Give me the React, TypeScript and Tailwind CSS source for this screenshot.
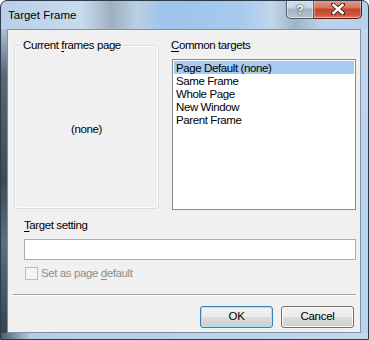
import React from 'react';

const font = { fontFamily: '"Liberation Sans", Arial, sans-serif' };

function TitleButtons() {
  return (
    <div className="flex self-start mr-[6px] -mt-px">
      <div className="w-[28px] h-[19px] rounded-bl-[5px] border border-t-0 border-[#4d5c6b] bg-[linear-gradient(to_bottom,#dbe4ee_0%,#c5d2df_45%,#a3b3c4_50%,#b5c3d1_100%)] flex items-center justify-center shadow-[inset_0_0_0_1px_rgba(255,255,255,0.5)]">
        <span
          className="text-white font-bold text-[13px] leading-none"
          style={{ ...font, textShadow: '0 0 2px #2a3a4a, 0 0 1px #2a3a4a' }}
        >
          ?
        </span>
      </div>
      <div className="w-[48px] h-[19px] rounded-br-[5px] border border-l-0 border-t-0 border-[#5a1a12] bg-[linear-gradient(to_bottom,#e8a08f_0%,#d7705c_45%,#c2442b_50%,#d0583d_85%,#e08a70_100%)] flex items-center justify-center shadow-[inset_0_0_0_1px_rgba(255,255,255,0.35)]">
        <svg width="14" height="12" viewBox="0 0 14 12">
          <path d="M2 1.5 L12 10.5 M12 1.5 L2 10.5" stroke="#4a1a10" strokeWidth="4.2" strokeLinecap="square" />
          <path d="M2.5 2 L11.5 10 M11.5 2 L2.5 10" stroke="#ffffff" strokeWidth="2.6" strokeLinecap="square" />
        </svg>
      </div>
    </div>
  );
}

function Button({ label, isDefault }: { label: string; isDefault?: boolean }) {
  return (
    <button
      className={
        'w-[73px] h-[22px] rounded-[3px] border text-[11.5px] tracking-[-0.3px] text-black bg-[linear-gradient(to_bottom,#f2f2f2_0%,#ebebeb_50%,#dddddd_51%,#cfcfcf_100%)] ' +
        (isDefault
          ? 'border-[#3c7fb1] shadow-[inset_0_0_0_1px_#a8e2f8]'
          : 'border-[#707070] shadow-[inset_0_0_0_1px_#fbfbfb]')
      }
      style={font}
    >
      {label}
    </button>
  );
}

export default function App() {
  const targets = ['Page Default (none)', 'Same Frame', 'Whole Page', 'New Window', 'Parent Frame'];

  return (
    <div
      className="w-[369px] h-[340px] flex flex-col border border-[#2b3a47] rounded-t-[7px] overflow-hidden bg-[linear-gradient(to_right,#b7cfe7_0%,#c8dbee_22%,#9fb0c0_30%,#b9cfe4_37%,#9cc3ea_45%,#a7cbee_66%,#c2d6ea_74%,#9fb4c8_80%,#bcd4ec_88%,#b5d0eb_100%)]"
      style={font}
    >
      {/* Title bar */}
      <div className="h-[28px] flex justify-between">
        <span className="pl-[7px] pt-[7px] text-[11.5px] leading-[14px] text-black">Target Frame</span>
        <TitleButtons />
      </div>

      <div className="flex flex-1">
        {/* Left frame edge */}
        <div className="w-[6px] bg-[linear-gradient(to_bottom,#a9c0d6_0%,#56687a_15%,#3b4b59_50%,#5a7080_70%,#344452_100%)]" />

        {/* Client area */}
        <div className="flex-1 border border-[#82919f] bg-[#f0f0f0] text-[11.5px] tracking-[-0.4px] text-black flex flex-col pl-[6px] pr-[4px] pt-[8px]">
          <div className="flex">
            <fieldset className="w-[145px] h-[171px] border border-[#d5dfe5] rounded-[3px] flex items-center justify-center shadow-[inset_0_0_0_1px_#fbfbfb]">
              <legend className="ml-[6px] px-[2px] leading-[14px]">
                Current <span className="underline underline-offset-2">f</span>rames page
              </legend>
              <span>(none)</span>
            </fieldset>

            <div className="ml-[12px] flex flex-col flex-1">
              <span className="leading-[14px]">
                <span className="underline underline-offset-2">C</span>ommon targets
              </span>
              <div className="mt-[7px] ml-px h-[151px] border border-[#828790] bg-white p-px">
                {targets.map((t, i) => (
                  <div
                    key={t}
                    className={'h-[13px] leading-[14px] pl-[2px] ' + (i === 0 ? 'bg-[#a6cbf1]' : '')}
                  >
                    {t}
                  </div>
                ))}
              </div>
            </div>
          </div>

          <div className="ml-[10px] mt-[8px] leading-[14px]">
            <span className="underline underline-offset-2">T</span>arget setting
          </div>
          <div className="ml-[10px] mt-[7px] h-[21px] border border-[#abadb3] bg-white" />

          <div className="ml-[11px] mt-[6px] flex items-center gap-[3px] text-[#8d8d8d]">
            <div className="w-[13px] h-[13px] border border-[#bcbcbc] bg-[#f4f4f4]" />
            <span className="leading-[14px]">
              Set as page <span className="underline underline-offset-2">d</span>efault
            </span>
          </div>

          <div className="-ml-px mt-[14px] h-px bg-[#a0a0a0] border-b border-white box-content" />

          <div className="mt-[10px] flex justify-end gap-[8px] pr-[2px]">
            <Button label="OK" isDefault />
            <Button label="Cancel" />
          </div>
        </div>

        {/* Right frame edge */}
        <div className="w-[7px] bg-[linear-gradient(to_bottom,#bfd6ec_0%,#b6d3f0_100%)]" />
      </div>

      {/* Bottom frame edge */}
      <div className="h-[6px] bg-[linear-gradient(to_right,#4a5c6b_0%,#b3cde8_8%,#c0d8f0_100%)]" />
    </div>
  );
}
